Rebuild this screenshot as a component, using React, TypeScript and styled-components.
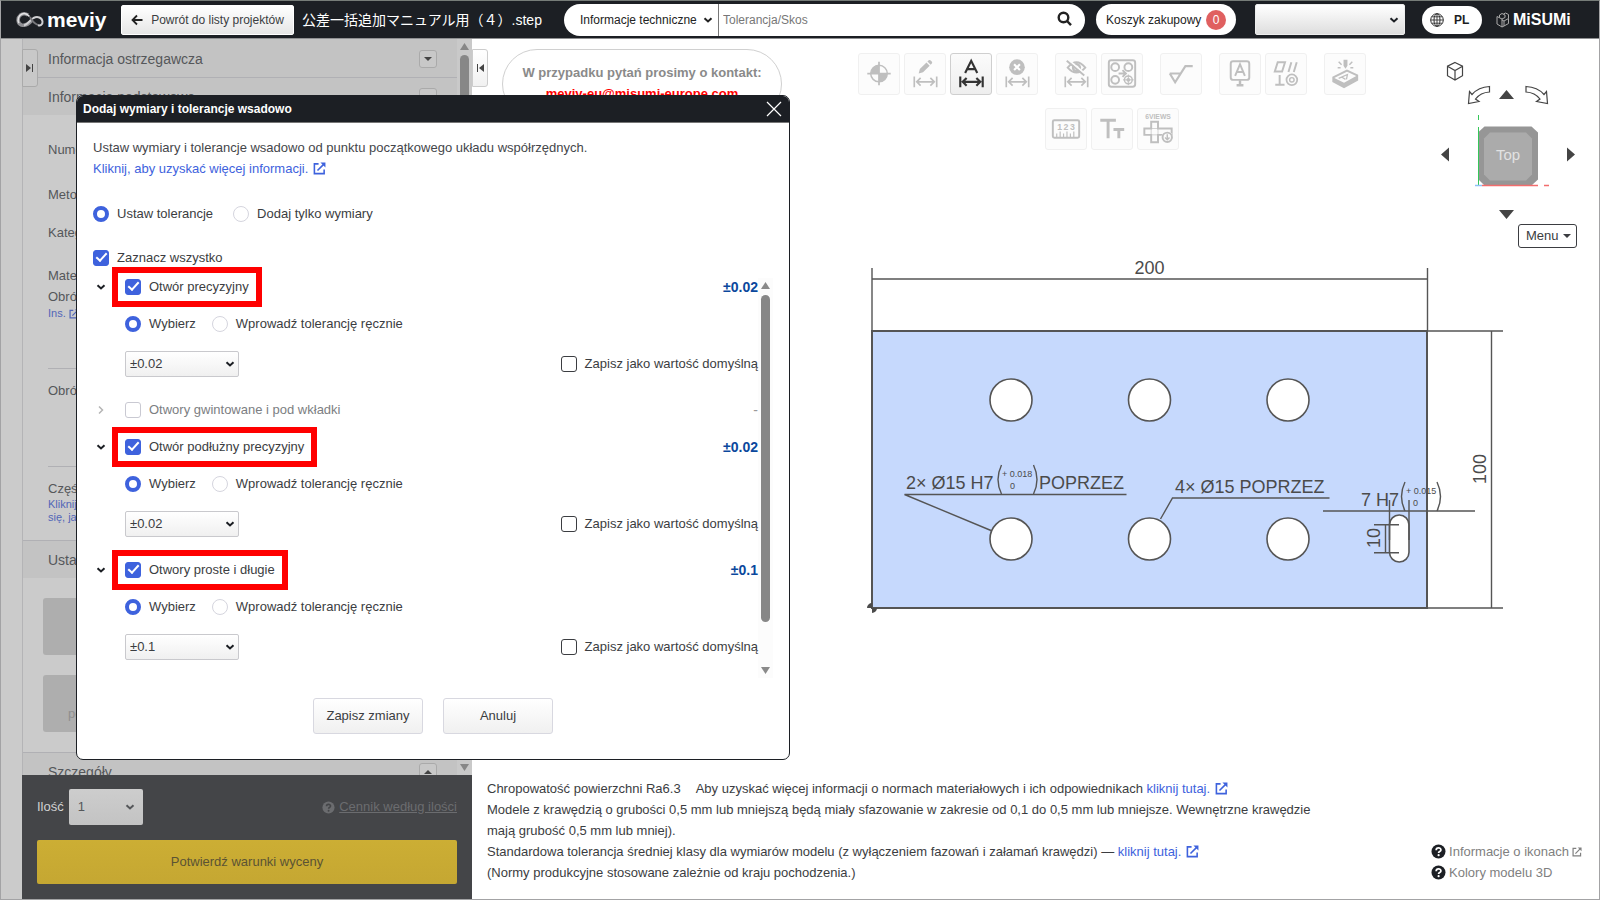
import React from 'react';
import styled, { createGlobalStyle, css } from 'styled-components';

const ink = '#1c1f24';
const text = '#3b3d41';
const blue = '#3e62dd';

const GlobalStyle = createGlobalStyle`
  *, *::before, *::after { box-sizing: border-box; }
  body {
    margin: 0;
    background: #fff;
    color: ${text};
    font: 13px/20px "Liberation Sans", Arial, "Noto Sans CJK JP", sans-serif;
  }
  button, input, select { font: inherit; color: inherit; margin: 0; }
  a { color: ${blue}; text-decoration: none; }
  svg { display: block; flex: none; }
`;

/* ---------- page frame ---------- */

const Page = styled.div`
  position: relative;
  display: flex;
  flex-direction: column;
  min-height: 100vh;
  border: 1px solid #a3a3a5;
  border-top-color: #767c78;
  overflow: hidden;
`;

const Header = styled.header`
  display: flex;
  align-items: center;
  height: 38px;
  padding-left: 15px;
  background: ${ink};
  border-bottom: 1px solid #8f9092;
  color: #fff;
  font-size: 12px;
`;

const Brand = styled.a`
  display: flex;
  align-items: center;
  gap: 2px;
  width: 105px;
  color: #fff;
  font-size: 21px;
  font-weight: 700;
  line-height: 24px;
`;

const BackButton = styled.button`
  display: flex;
  align-items: center;
  justify-content: center;
  gap: 8px;
  width: 173px;
  height: 30px;
  padding: 0;
  border: 1px solid #fff;
  border-radius: 2px;
  background: linear-gradient(#fff, #e6e6e6);
  color: ${text};
`;

const FileName = styled.h1`
  width: 262px;
  margin: 0 0 0 8px;
  font-size: 14px;
  font-weight: 400;
  white-space: nowrap;
`;

const Search = styled.form`
  display: flex;
  align-items: center;
  flex: 1;
  height: 32px;
  padding: 0 12px 0 16px;
  border-radius: 16px;
  background: #fff;
  color: #222;
`;

const SearchInput = styled.input`
  flex: 1;
  min-width: 0;
  height: 32px;
  padding: 0 4px;
  border: 0;
  border-left: 1px solid #777;
  background: transparent;
  &::placeholder { color: #777; opacity: 1; }
`;

const IconButton = styled.button`
  display: grid;
  place-items: center;
  padding: 0;
  border: 0;
  background: none;
  color: inherit;
`;

const CartButton = styled.button`
  display: flex;
  align-items: center;
  justify-content: space-between;
  width: 140px;
  height: 31px;
  margin-left: 11px;
  padding: 0 10px;
  border: 0;
  border-radius: 16px;
  background: #fff;
  color: #222;
  white-space: nowrap;
`;

const Badge = styled.span`
  width: 20px;
  height: 20px;
  border-radius: 10px;
  background: #e06060;
  color: #fff;
  text-align: center;
`;

const LangButton = styled.button`
  display: flex;
  align-items: center;
  gap: 10px;
  width: 60px;
  height: 28px;
  margin-left: 17px;
  padding: 0 8px;
  border: 0;
  border-radius: 14px;
  background: #fff;
  color: ${ink};
  font-weight: 700;
`;

const Misumi = styled.a`
  display: flex;
  align-items: center;
  gap: 3px;
  width: 103px;
  margin-left: 14px;
  color: #fff;
  font-size: 16px;
  font-weight: 700;
`;

/* ---------- form parts ---------- */

const SelectBox = styled.span<{ $variant: 'plain' | 'header' | 'tolerance' | 'quantity' }>`
  display: grid;
  align-items: center;
  & > * { grid-area: 1 / 1; }
  & > svg { justify-self: end; pointer-events: none; }
  & > select {
    width: 100%;
    height: 100%;
    appearance: none;
    border: 0;
    background: none;
  }
  ${p => p.$variant === 'plain' && css`
    width: 138px; height: 32px;
    & > svg { margin-right: 5px; }
  `}
  ${p => p.$variant === 'header' && css`
    width: 150px; height: 31px; margin-left: 19px;
    color: ${ink};
    & > select { border: 1px solid #eee; border-radius: 2px; background: linear-gradient(#fff, #dedede); }
    & > svg { margin-right: 6px; }
  `}
  ${p => p.$variant === 'tolerance' && css`
    width: 114px; height: 26px;
    & > select { padding-left: 4px; border: 1px solid #c9c9cd; border-radius: 2px; background: linear-gradient(#fff, #f0f0f0); }
    & > svg { margin-right: 4px; }
  `}
  ${p => p.$variant === 'quantity' && css`
    width: 74px; height: 36px; color: #55575a;
    & > select { padding-left: 9px; border-radius: 2px; background: linear-gradient(#cdcdcd, #c3c3c3); }
    & > svg { margin-right: 8px; }
  `}
`;

const Choice = styled.label<{ $muted?: boolean }>`
  display: flex;
  align-items: center;
  gap: 8px;
  white-space: nowrap;
  ${p => p.$muted && css`color: #7c7e82;`}
`;

const Check = styled.input.attrs({ type: 'checkbox' })<{ $dark?: boolean }>`
  appearance: none;
  flex: none;
  display: grid;
  place-items: center;
  width: 16px;
  height: 16px;
  border: 1px solid ${p => (p.$dark ? '#3b3d41' : '#c9c9d2')};
  border-radius: 3px;
  background: #fff;
  &:checked { border-color: ${blue}; background: ${blue}; }
  &:checked::after {
    content: '';
    width: 11px;
    height: 6px;
    margin-bottom: 4px;
    border: solid #fff;
    border-width: 0 0 2px 2px;
    transform: rotate(-48deg);
  }
`;

const Radio = styled.input.attrs({ type: 'radio' })`
  appearance: none;
  flex: none;
  width: 16px;
  height: 16px;
  border: 1px solid #d5d5de;
  border-radius: 50%;
  background: #fff;
  &:checked { border: 4px solid ${blue}; }
`;

const ChoiceRow = styled.div<{ $tight?: boolean }>`
  display: flex;
  align-items: center;
  gap: ${p => (p.$tight ? 16 : 20)}px;
`;

/* ---------- sidebar ---------- */

const Main = styled.div`
  display: grid;
  grid-template-columns: 21px 450px minmax(0, 1fr);
  flex: 1;
`;

const Rail = styled.div`
  background: #cbcbcb;
`;

const Sidebar = styled.aside`
  display: flex;
  flex-direction: column;
  min-height: 0;
  background: #cbcbcb;
`;

const SidebarScroll = styled.div`
  display: grid;
  grid-template-columns: minmax(0, 1fr) 15px;
  flex: 1 1 0;
  border-left: 1px solid #b4b4b6;
  overflow: hidden;
`;

const Sections = styled.div`
  min-height: 0;
  height: 0;
`;

const SectionHead = styled.div<{ $ruled?: boolean }>`
  display: flex;
  align-items: center;
  justify-content: space-between;
  height: 38px;
  padding: 0 20px 0 25px;
  background: #c3c3c3;
  border-top: 1px solid ${p => (p.$ruled ? '#b0b0b4' : '#c3c3c3')};
  color: #55575a;
  font-size: 14px;
`;

const FoldButton = styled.button`
  display: grid;
  place-items: center;
  width: 18px;
  height: 18px;
  padding: 0;
  border: 1px solid #aaa;
  border-radius: 3px;
  background: #c8c8c8;
  color: #444;
`;

const SectionBody = styled.div<{ $height: number }>`
  height: ${p => p.$height}px;
  padding: 25px 20px 0 25px;
  color: #55575a;
`;

const Field = styled.div<{ $height: number }>`
  height: ${p => p.$height}px;
  overflow: hidden;
`;

const Hint = styled.a`
  display: flex;
  align-items: center;
  gap: 3px;
  color: #5266b8;
  font-size: 11px;
  line-height: 13px;
`;

const Rule = styled.hr`
  height: 1px;
  margin: 0 0 12px;
  border: 0;
  background: #b0b0b4;
`;

const Tiles = styled.div`
  display: grid;
  gap: 20px;
  height: 174px;
  padding: 20px;
  align-content: start;
`;

const Tile = styled.button`
  height: 57px;
  padding: 20px 0 0 25px;
  border: 0;
  border-radius: 3px;
  background: #aeaeae;
  color: #8f8f8f;
  text-align: left;
`;

const SidebarTrack = styled.div`
  display: flex;
  flex-direction: column;
  align-items: center;
  gap: 5px;
  padding: 4px 0;
  background: #c9c9c9;
`;

const Thumb = styled.div<{ $height: number }>`
  width: 9px;
  height: ${p => p.$height}px;
  border-radius: 5px;
  background: #878787;
`;

const TrackSpace = styled.div`
  flex: 1;
`;

const OrderPanel = styled.div`
  display: flex;
  flex-direction: column;
  gap: 15px;
  height: 124px;
  padding: 14px 15px;
  background: #444548;
`;

const OrderRow = styled.div`
  display: flex;
  align-items: center;
  justify-content: space-between;
`;

const Quantity = styled.label`
  display: flex;
  align-items: center;
  gap: 5px;
  color: #d2d2d2;
`;

const PriceLink = styled.a`
  display: flex;
  align-items: center;
  gap: 4px;
  color: #6b6c6f;
  & > span { text-decoration: underline; }
`;

const QuoteButton = styled.button`
  height: 44px;
  border: 0;
  border-radius: 2px;
  background: linear-gradient(#ccae34, #c5a732);
  color: #5b5334;
`;

const PanelTab = styled.button<{ $side: 'left' | 'right' }>`
  position: absolute;
  top: 48px;
  left: ${p => (p.$side === 'left' ? 21 : 471)}px;
  display: grid;
  place-items: center;
  width: 16px;
  height: 38px;
  padding: 0;
  border: 1px solid ${p => (p.$side === 'left' ? '#aaa' : '#ccc')};
  border-radius: 0 3px 3px 0;
  background: ${p => (p.$side === 'left' ? '#c8c8c8' : 'linear-gradient(#fff, #f1f1f1)')};
  color: #444;
`;

/* ---------- viewer ---------- */

const Viewer = styled.main`
  display: flex;
  flex-direction: column;
  justify-content: space-between;
  background: #fff;
`;

const ViewerTop = styled.div`
  display: flex;
  align-items: flex-start;
  padding: 10px 22px 0 30px;
`;

const Contact = styled.address`
  width: 280px;
  height: 70px;
  padding-top: 12px;
  border: 1px solid #d0d0d0;
  border-radius: 36px;
  color: #8a8a8a;
  font-style: normal;
  font-weight: 700;
  line-height: 21px;
  text-align: center;
  white-space: nowrap;
  & > a { display: block; color: #f00; }
`;

const Toolbar = styled.div`
  display: flex;
  flex-direction: column;
  align-items: center;
  gap: 13px;
  flex: 1;
  padding-top: 4px;
`;

const ToolRow = styled.div`
  display: flex;
  gap: 17px;
`;

const ToolGroup = styled.div`
  display: flex;
  gap: 4px;
`;

const Tool = styled.button<{ $active?: boolean }>`
  display: block;
  width: 42px;
  height: 42px;
  padding: 0;
  border: 1px solid ${p => (p.$active ? '#cfcfcf' : '#f0f0f0')};
  border-radius: 3px;
  background: ${p => (p.$active ? 'linear-gradient(#fbfbfb, #eee)' : '#fcfcfc')};
  color: ${p => (p.$active ? '#333' : '#bfbfbf')};
`;

const ViewNav = styled.div`
  display: flex;
  flex-direction: column;
  align-items: flex-end;
  gap: 4px;
  width: 136px;
  padding-top: 11px;
`;

const MenuButton = styled.button`
  display: flex;
  align-items: center;
  justify-content: space-between;
  width: 59px;
  height: 24px;
  padding: 0 5px 0 7px;
  border: 1px solid ${text};
  border-radius: 3px;
  background: #fff;
`;

const Drawing = styled.div`
  display: flex;
  justify-content: flex-end;
  padding: 8px 88px 0 0;
`;

const Notes = styled.footer`
  display: flex;
  align-items: flex-end;
  justify-content: space-between;
  margin-top: auto;
  padding: 0 17px 16px 15px;
  line-height: 21px;
`;

const NoteText = styled.div`
  max-width: 845px;
  & > p { margin: 0; }
`;

const InlineLink = styled.a`
  display: inline-flex;
  align-items: center;
  gap: 5px;
`;

const Gap = styled.span`
  display: inline-block;
  width: 15px;
`;

const Legend = styled.div`
  display: grid;
  & > a {
    display: flex;
    align-items: center;
    gap: 3px;
    color: #808080;
  }
`;

/* ---------- dialog ---------- */

const Dialog = styled.section`
  position: absolute;
  top: 94px;
  left: 75px;
  width: 714px;
  border: 1px solid ${ink};
  border-radius: 7px;
  background: #fff;
  overflow: hidden;
`;

const DialogHead = styled.div`
  display: flex;
  align-items: center;
  justify-content: space-between;
  height: 27px;
  padding: 0 7px 0 6px;
  border-bottom: 1px solid #777;
  background: ${ink};
  color: #fff;
  & > h2 { margin: 0; font-size: 12px; }
`;

const DialogBody = styled.div`
  padding: 14px 16px 25px;
`;

const Intro = styled.p`
  margin: 0 0 25px;
  line-height: 21px;
  color: #44464a;
`;

const SelectAll = styled.div`
  margin-top: 24px;
`;

const ListFrame = styled.div`
  display: grid;
  grid-template-columns: minmax(0, 1fr) 15px;
  height: 410px;
`;

const Groups = styled.div`
  position: relative;
`;

const GroupHead = styled.div`
  display: flex;
  align-items: center;
  height: 37px;
`;

const Toggle = styled(IconButton)`
  width: 16px;
  height: 16px;
  margin-right: 3px;
`;

const Frame = styled.div<{ $marked?: boolean }>`
  display: flex;
  align-items: center;
  height: 40px;
  padding: 0 7px;
  border: 6px solid ${p => (p.$marked ? '#f00' : 'transparent')};
`;

const Value = styled.output<{ $muted?: boolean }>`
  margin-left: auto;
  color: ${p => (p.$muted ? '#999' : '#0b489d')};
  font-size: 14px;
  font-weight: ${p => (p.$muted ? 400 : 700)};
`;

const GroupBody = styled.div`
  padding-left: 32px;
  height: 86px;
  & > :first-child { height: 37px; }
`;

const ToleranceRow = styled.div`
  display: flex;
  align-items: center;
  justify-content: space-between;
  height: 43px;
`;

const ListTrack = styled.div`
  display: flex;
  flex-direction: column;
  align-items: center;
  gap: 6px;
  margin-top: 10px;
  padding: 4px 0;
  background: #fcfcfc;
`;

const Actions = styled.div`
  display: flex;
  justify-content: center;
  gap: 20px;
  margin-top: 20px;
`;

const ActionButton = styled.button`
  width: 110px;
  height: 36px;
  border: 1px solid #d8d8e0;
  border-radius: 3px;
  background: linear-gradient(#fff, #f0f0f0);
`;

/* ---------- icons ---------- */

const Chevron = ({ right = false, color = 'currentColor' }: { right?: boolean; color?: string }) => (
  <svg width="10" height="10" viewBox="0 0 10 10" fill="none" stroke={color} strokeWidth={right ? 1.5 : 2}>
    <path d={right ? 'M3 1.5l3.5 3.5L3 8.500' : 'M1.500 3.200l3.500 3.300 3.500-3.300'} />
  </svg>
);

const Triangle = ({ up = false, color = 'currentColor', size = 9 }: { up?: boolean; color?: string; size?: number }) => (
  <svg width={size} height={size - 2} viewBox="0 0 9 7">
    <path d={up ? 'M4.500 0L9 7H0z' : 'M0 0h9L4.500 7z'} fill={color} />
  </svg>
);

const Caret = ({ up = false }: { up?: boolean }) => (
  <svg width="8" height="4" viewBox="0 0 8 4">
    <path d={up ? 'M4 0l4 4H0z' : 'M0 0h8L4 4z'} fill="currentColor" />
  </svg>
);

const External = ({ size = 13 }: { size?: number }) => (
  <svg width={size} height={size} viewBox="0 0 14 14" fill="none" stroke="currentColor" strokeWidth="1.700">
    <path d="M6 2H1.500v10.500H12V8M4.800 9.200L12 2" />
    <path d="M8 .6h5.400V6z" fill="currentColor" stroke="none" />
  </svg>
);

const Question = ({ fill, mark, size = 15 }: { fill: string; mark: string; size?: number }) => (
  <svg width={size} height={size} viewBox="0 0 15 15">
    <circle cx="7.5" cy="7.5" r="7" fill={fill} />
    <path d="M5.200 6.200c0-3 4.700-3 4.700-.3 0 1.700-2.300 1.500-2.300 3" fill="none" stroke={mark} strokeWidth="1.800" />
    <circle cx="7.6" cy="11.200" r="1.100" fill={mark} />
  </svg>
);

const Span = () => (
  <path d="M9.500 24v11M32.500 24v11M12 29.500h18M16 25.500l-4 4 4 4M26 25.500l4 4-4 4" strokeWidth="1.700" />
);

const toolDrawings: Record<string, React.ReactNode> = {
  origin: (
    <>
      <circle cx="20.5" cy="21" r="8.500" strokeWidth="1.500" />
      <path d="M20.500 21v-8.500a8.500 8.500 0 0 0-8.500 8.500zM20.500 21v8.500a8.500 8.500 0 0 0 8.500-8.500z" fill="currentColor" stroke="none" />
      <path d="M20.500 9v24M8.500 21h24" strokeWidth="1.800" />
    </>
  ),
  edit: (
    <>
      <path d="M14 21l1.200-4.500 6.800-6.800 3.300 3.300-6.800 6.800zM23 8.800l1.300-1.300q1.200-.8 2.300.3l.8.8q1 1.200.1 2.200l-1.200 1.300z" fill="currentColor" stroke="none" />
      <Span />
    </>
  ),
  auto: (
    <>
      <path d="M14.500 20.500L20.700 8l6.200 12.500M17 16.500h7.500" strokeWidth="2.200" />
      <path d="M9.500 24v11M32.500 24v11M12 29.500h18M16 25.500l-4 4 4 4M26 25.500l4 4-4 4" strokeWidth="2.200" />
    </>
  ),
  remove: (
    <>
      <circle cx="20.5" cy="14.500" r="8" fill="currentColor" stroke="none" />
      <path d="M17.500 11.500l6 6M23.500 11.500l-6 6" stroke="#fff" strokeWidth="2.200" />
      <Span />
    </>
  ),
  hide: (
    <>
      <path d="M12 15q9-11 18 0-9 10-18 0z" strokeWidth="2" />
      <circle cx="21" cy="15" r="3.500" strokeWidth="2.500" />
      <path d="M12.500 7l18 15" stroke="#fcfcfc" strokeWidth="2" />
      <path d="M11 8l18 15" strokeWidth="2" />
      <Span />
    </>
  ),
  pattern: (
    <>
      <rect x="7" y="7.500" width="27" height="27" rx="2.500" strokeWidth="2" />
      <circle cx="13.500" cy="14.500" r="4" strokeWidth="2" />
      <circle cx="27" cy="14.500" r="4" strokeWidth="2" />
      <circle cx="13.500" cy="27.500" r="4" strokeWidth="2" />
      <circle cx="27" cy="27.500" r="4" strokeWidth="1.500" />
      <circle cx="27" cy="27.500" r="2" fill="currentColor" stroke="none" />
      <path d="M27 22v11M21.500 27.500h11" strokeWidth="1" />
      <path d="M17 21h7M21 17.500l3.500 3.500-3.500 3.500" strokeWidth="2" />
    </>
  ),
  roughness: <path d="M9 21h12M9 21l5.500 9L25 13.500h7.500" strokeWidth="2.200" />,
  datum: (
    <>
      <rect x="11" y="8.500" width="19" height="19" rx="2.500" strokeWidth="2" />
      <path d="M15.500 23.500l5-12 5 12M17 19.500h7" strokeWidth="2" />
      <path d="M20.500 28v5M17 33h7" strokeWidth="2.500" />
    </>
  ),
  geometric: (
    <>
      <path d="M9 19l3-9.500h7.500l-3 9.500zM23 19.500l3-10M28.500 19.500l3-10M14 22.500v10M9.500 32.500h9.500" strokeWidth="2" />
      <circle cx="26.500" cy="27.500" r="5.500" strokeWidth="1.800" />
      <circle cx="26.500" cy="27.500" r="2.300" strokeWidth="1.500" />
    </>
  ),
  engraving: (
    <>
      <path d="M8.500 25l14-7 10.500 5v4.500l-13.500 7.500-11-6z" strokeWidth="2" />
      <path d="M8.500 25l11 5.500L33 23v4.500L19.500 35l-11-6z" fill="currentColor" stroke="none" />
      <path d="M14 26l9-4-1 5M17 24.500l4 2.500" strokeWidth="1.300" />
      <path d="M14 9l3 3M28 9l-3 3M13 15h3M26 15h3" strokeWidth="1.500" />
      <path d="M19 7h4v6l-2 3-2-3z" fill="currentColor" stroke="none" />
    </>
  ),
  measure: (
    <>
      <rect x="7" y="12.500" width="27" height="18" rx="1.500" strokeWidth="2" />
      <path d="M11 30v-4M14.500 30v-6M18 30v-4M21.500 30v-6M25 30v-4M28.500 30v-6" strokeWidth="1.200" />
      <text x="11.500" y="23" fontSize="9" fontWeight="700" letterSpacing="1.500" fill="currentColor" stroke="none">123</text>
    </>
  ),
  textSize: (
    <>
      <path d="M8.500 12.500h16M16.500 12.500V31" strokeWidth="3" />
      <path d="M22 22h11M27.500 22v9" strokeWidth="3" />
    </>
  ),
  sixViews: (
    <>
      <text x="20.500" y="11" fontSize="7" fontWeight="700" textAnchor="middle" fill="currentColor" stroke="none">6VIEWS</text>
      <path d="M13.500 14h7v7h14v6.500h-14V35h-7v-7.500h-7V21h7z" strokeWidth="2" />
      <path d="M13.500 21h7v6.500h-7z" strokeWidth=".7" />
      <circle cx="30" cy="30" r="6" fill="#fcfcfc" stroke="none" />
      <circle cx="30" cy="30" r="4.800" strokeWidth="2" />
      <path d="M30 27v5M27.700 30.300l2.300 2.200 2.300-2.200" strokeWidth="1.500" />
    </>
  ),
};

const ToolButton = ({ name, label, active }: { name: string; label: string; active?: boolean }) => (
  <Tool type="button" aria-label={label} $active={active}>
    <svg width="40" height="40" viewBox="0 1 41 41" fill="none" stroke="currentColor">
      {toolDrawings[name]}
    </svg>
  </Tool>
);

const CubeNavigator = () => (
  <svg width="136" height="160" viewBox="1441 60 136 160" role="img" aria-label="Top">
    <g fill="none" stroke="#444" strokeWidth="1.200">
      <path d="M1455 62.500l7.500 3.700v9.500L1455 80l-7.500-4.300v-9.500zM1447.500 66.200l7.500 4.300 7.500-4.300M1455 70.500V80" />
      <path d="M1489.500 86.500v5.500q-9 .5-14 7l3.500 2.500-10.500 2 1-12 2.500 3q6.500-7.500 17.500-8z" />
      <path d="M1526 86.500v5.500q9 .5 14 7l-3.500 2.500 11 2-1-12-2.500 3q-6.500-7.500-18-8z" />
    </g>
    <g fill="#444">
      <path d="M1506.500 90l7.500 9h-15zM1506.500 219l7.500-9h-15zM1441 154.500l8-7v14zM1575 154.500l-8-7v14z" />
    </g>
    <path d="M1478.500 132l6-5.500h47l6.500 6v47l-6.500 6h-47l-6-6z" fill="#969696" />
    <path d="M1484 138.500l6-6h36l6 6v36l-6 6h-36l-6-6z" fill="#ababab" />
    <path d="M1478.500 115v5M1478.500 127v58" stroke="#35c759" />
    <path d="M1482 185.500h56M1544 185.500h5" stroke="#f26d6d" strokeWidth="1.500" />
    <path d="M1475 185.500h7" stroke="#8fc3f5" strokeWidth="1.500" />
    <text x="1508" y="160" fontSize="15" textAnchor="middle" fill="#e2e2e2">Top</text>
  </svg>
);

const PlateDrawing = () => (
  <svg width="648" height="360" viewBox="863 256 648 360" fill="#4b4b4b" fontSize="18" role="img" aria-label="200 × 100">
    <rect x="872" y="331" width="555" height="277" fill="#c6d9fd" stroke="#555" strokeWidth="2" />
    <g fill="none" stroke="#555" strokeWidth="1.400">
      <path d="M872 268v63M1427.500 268v63M872 279h555M1427 331h76M1427 608h76M1491.500 331v277" />
      {[1011, 1149.5, 1288].map(x => [400, 539].map(y => (
        <circle key={`${x}-${y}`} cx={x} cy={y} r="21" fill="#fff" strokeWidth="1.600" />
      )))}
      <rect x="1389.500" y="515" width="19.500" height="47" rx="9.700" fill="#fff" strokeWidth="1.600" />
      <path d="M991 530.500L904.500 494.500H1126.500M1160.500 519l12-21H1329.500M1323 511h152M1389.500 500v40M1409 500v40M1374 524.700h25M1374 552.700h25M1385.500 524.700v28" />
      <path d="M1001.500 465q-7 14.500 0 29M1033.500 465q7 14.500 0 29M1405 482q-7 14.500 0 29M1437 482q7 14.500 0 29" />
    </g>
    <path d="M872 608v-5a5 5 0 0 0-5 5zM872 608v5a5 5 0 0 0 5-5z" />
    <text x="1149.500" y="274" textAnchor="middle">200</text>
    <text transform="translate(1486 469) rotate(-90)" textAnchor="middle">100</text>
    <text transform="translate(1380 538) rotate(-90)" textAnchor="middle">10</text>
    <text x="906" y="489">2× Ø15 H7</text>
    <text x="1039" y="489">POPRZEZ</text>
    <text x="1175" y="493">4× Ø15 POPRZEZ</text>
    <text x="1361" y="506">7 H7</text>
    <g fontSize="9">
      <text x="1002" y="477">+ 0.018</text>
      <text x="1010" y="489">0</text>
      <text x="1406" y="494">+ 0.015</text>
      <text x="1413" y="506">0</text>
    </g>
  </svg>
);

/* ---------- composition ---------- */

type GroupData = { id: string; name: string; value: string; open: boolean };

const groups: GroupData[] = [
  { id: 'precise', name: 'Otwór precyzyjny', value: '±0.02', open: true },
  { id: 'threaded', name: 'Otwory gwintowane i pod wkładki', value: '-', open: false },
  { id: 'slot', name: 'Otwór podłużny precyzyjny', value: '±0.02', open: true },
  { id: 'plain', name: 'Otwory proste i długie', value: '±0.1', open: true },
];

const ToleranceGroup = ({ id, name, value, open }: GroupData) => (
  <div>
    <GroupHead>
      <Toggle type="button" aria-label={name} aria-expanded={open}>
        <Chevron right={!open} color={open ? ink : '#b5b5b5'} />
      </Toggle>
      <Frame $marked={open}>
        <Choice $muted={!open}>
          <Check defaultChecked={open} disabled={!open} />
          {name}
        </Choice>
      </Frame>
      <Value $muted={!open}>{value}</Value>
    </GroupHead>
    {open && (
      <GroupBody>
        <ChoiceRow $tight>
          <Choice><Radio name={id} defaultChecked />Wybierz</Choice>
          <Choice><Radio name={id} />Wprowadź tolerancję ręcznie</Choice>
        </ChoiceRow>
        <ToleranceRow>
          <SelectBox $variant="tolerance">
            <select aria-label={name} defaultValue={value}><option>{value}</option></select>
            <Chevron color={ink} />
          </SelectBox>
          <Choice><Check $dark />Zapisz jako wartość domyślną</Choice>
        </ToleranceRow>
      </GroupBody>
    )}
  </div>
);

export default function App() {
  return (
    <Page>
      <GlobalStyle />
      <Header>
        <Brand href="#">
          <svg width="29" height="18" viewBox="0 0 29 18" fill="none">
            <path d="M12 4Q8 1.500 4.500 4C1 7 1.500 12.500 5.500 14c4.500 1.300 8-2 10.500-5" stroke="#8f8f93" strokeWidth="3.600" />
            <path d="M13.500 5.500Q10 1.500 6 3c-3.500 1.500-5 6-3 9" stroke="#e4e4e6" strokeWidth="1.500" />
            <path d="M8 14.500C12 13.500 14 9 17.500 7c4-2 8.500-.5 9 3.500.4 3.500-2.500 4.500-4.500 3.500" stroke="#d0d0d3" strokeWidth="2" />
            <path d="M14 6q3 6 8 8" stroke="#77777b" strokeWidth="1.800" />
          </svg>
          meviy
        </Brand>
        <BackButton type="button">
          <svg width="12" height="12" viewBox="0 0 12 12" fill="none" stroke="#222" strokeWidth="1.800">
            <path d="M11.500 6H1.500M6 1.500L1.500 6 6 10.500" />
          </svg>
          Powrót do listy projektów
        </BackButton>
        <FileName>公差一括追加マニュアル用（４）.step</FileName>
        <Search>
          <SelectBox $variant="plain">
            <select aria-label="Zakres"><option>Informacje techniczne</option></select>
            <Chevron />
          </SelectBox>
          <SearchInput aria-label="Szukaj" placeholder="Tolerancja/Skos" />
          <IconButton type="button" aria-label="Szukaj">
            <svg width="17" height="17" viewBox="0 0 17 17" fill="none" stroke="#222" strokeWidth="2.400">
              <circle cx="7.500" cy="6.500" r="4.800" />
              <path d="M11 10l4 4.200" />
            </svg>
          </IconButton>
        </Search>
        <CartButton type="button">Koszyk zakupowy<Badge>0</Badge></CartButton>
        <SelectBox $variant="header">
          <select aria-label="Konto" />
          <Chevron />
        </SelectBox>
        <LangButton type="button">
          <svg width="14" height="14" viewBox="0 0 14 14" fill="none" stroke="#333">
            <circle cx="7" cy="7" r="6.300" />
            <ellipse cx="7" cy="7" rx="3" ry="6.300" />
            <path d="M7 .7v12.600M.7 7h12.600M1.700 3.800h10.600M1.700 10.200h10.600" strokeWidth=".9" />
          </svg>
          PL
        </LangButton>
        <Misumi href="#">
          <svg width="14" height="16" viewBox="0 0 14 16" fill="none" stroke="#aaa" strokeWidth="1">
            <path d="M6 15V7L1 4.500v7.500zM6 7l3-1.500V3L6 1.500 3.500 3v2.500M6 15l2-1V9l4.500-2.500V2.500L9.500 1 7.500 2M8 14l4.500-2.500v-5M8 9L6 8" />
          </svg>
          MiSUMi
        </Misumi>
      </Header>

      <Main>
        <Rail />
        <Sidebar>
          <SidebarScroll>
            <Sections>
              <SectionHead>
                Informacja ostrzegawcza
                <FoldButton type="button" aria-label="Rozwiń"><Caret /></FoldButton>
              </SectionHead>
              <SectionHead $ruled>
                Informacje podstawowe
                <FoldButton type="button" aria-label="Zwiń"><Caret up /></FoldButton>
              </SectionHead>
              <SectionBody $height={425}>
                <Field $height={45}>Numer</Field>
                <Field $height={38}>Metoda</Field>
                <Field $height={43}>Kategoria</Field>
                <Field $height={21}>Materiał</Field>
                <Field $height={20}>Obróbka</Field>
                <Field $height={61}><Hint href="#">Ins. <External size={10} /></Hint></Field>
                <Rule />
                <Field $height={85}>Obróbka</Field>
                <Rule />
                <Field $height={19}>Części</Field>
                <Hint href="#">Kliknij,<br />się, jak</Hint>
              </SectionBody>
              <SectionHead $ruled>Ustawienia</SectionHead>
              <Tiles>
                <Tile type="button" aria-label="Ustawienia" />
                <Tile type="button">po</Tile>
              </Tiles>
              <SectionHead $ruled>
                Szczegóły
                <FoldButton type="button" aria-label="Zwiń"><Caret up /></FoldButton>
              </SectionHead>
            </Sections>
            <SidebarTrack>
              <Triangle up color="#878787" />
              <Thumb $height={500} />
              <TrackSpace />
              <Triangle color="#878787" />
            </SidebarTrack>
          </SidebarScroll>
          <OrderPanel>
            <OrderRow>
              <Quantity>
                Ilość
                <SelectBox $variant="quantity">
                  <select><option>1</option></select>
                  <Chevron />
                </SelectBox>
              </Quantity>
              <PriceLink href="#">
                <Question fill="#6b6c6f" mark="#444548" size={13} />
                <span>Cennik według ilości</span>
              </PriceLink>
            </OrderRow>
            <QuoteButton type="button">Potwierdź warunki wyceny</QuoteButton>
          </OrderPanel>
        </Sidebar>

        <Viewer>
          <ViewerTop>
            <Contact>
              W przypadku pytań prosimy o kontakt:
              <a href="mailto:meviy-eu@misumi-europe.com">meviy-eu@misumi-europe.com</a>
            </Contact>
            <Toolbar>
              <ToolRow>
                <ToolGroup>
                  <ToolButton name="origin" label="Punkt początkowy" />
                  <ToolButton name="edit" label="Edytuj wymiar" />
                  <ToolButton name="auto" label="Dodaj wymiary wsadowo" active />
                  <ToolButton name="remove" label="Usuń wymiar" />
                </ToolGroup>
                <ToolGroup>
                  <ToolButton name="hide" label="Ukryj wymiar" />
                  <ToolButton name="pattern" label="Grupa otworów" />
                </ToolGroup>
                <ToolGroup><ToolButton name="roughness" label="Chropowatość" /></ToolGroup>
                <ToolGroup>
                  <ToolButton name="datum" label="Baza" />
                  <ToolButton name="geometric" label="Tolerancja geometryczna" />
                </ToolGroup>
                <ToolGroup><ToolButton name="engraving" label="Grawerowanie" /></ToolGroup>
              </ToolRow>
              <ToolRow>
                <ToolGroup>
                  <ToolButton name="measure" label="Pomiar" />
                  <ToolButton name="textSize" label="Rozmiar tekstu" />
                  <ToolButton name="sixViews" label="Widoki" />
                </ToolGroup>
              </ToolRow>
            </Toolbar>
            <ViewNav>
              <CubeNavigator />
              <MenuButton type="button">Menu <Caret /></MenuButton>
            </ViewNav>
          </ViewerTop>
          <Drawing><PlateDrawing /></Drawing>
          <Notes>
            <NoteText>
              <p>
                Chropowatość powierzchni Ra6.3<Gap />Aby uzyskać więcej informacji o normach materiałowych i ich odpowiednikach{' '}
                <InlineLink href="#">kliknij tutaj. <External /></InlineLink>
              </p>
              <p>
                Modele z krawędzią o grubości 0,5 mm lub mniejszą będą miały sfazowanie w zakresie od 0,1 do 0,5 mm lub mniejsze.
                Wewnętrzne krawędzie mają grubość 0,5 mm lub mniej).
              </p>
              <p>
                Standardowa tolerancja średniej klasy dla wymiarów modelu (z wyłączeniem fazowań i załamań krawędzi) —{' '}
                <InlineLink href="#">kliknij tutaj. <External /></InlineLink>
              </p>
              <p>(Normy produkcyjne stosowane zależnie od kraju pochodzenia.)</p>
            </NoteText>
            <Legend>
              <a href="#"><Question fill={ink} mark="#fff" />Informacje o ikonach <External size={10} /></a>
              <a href="#"><Question fill={ink} mark="#fff" />Kolory modelu 3D</a>
            </Legend>
          </Notes>
        </Viewer>
      </Main>

      <PanelTab type="button" $side="left" aria-label="Rozwiń panel">
        <svg width="8" height="10" viewBox="0 0 8 10" fill="currentColor"><path d="M0 1l5 4-5 4zM6 1h1v8H6z" /></svg>
      </PanelTab>
      <PanelTab type="button" $side="right" aria-label="Zwiń panel">
        <svg width="8" height="10" viewBox="0 0 8 10" fill="currentColor"><path d="M8 1L3 5l5 4zM1 1h1v8H1z" /></svg>
      </PanelTab>

      <Dialog role="dialog" aria-labelledby="dialog-title">
        <DialogHead>
          <h2 id="dialog-title">Dodaj wymiary i tolerancje wsadowo</h2>
          <IconButton type="button" aria-label="Zamknij">
            <svg width="16" height="16" viewBox="0 0 16 16" stroke="#fff" strokeWidth="1.200">
              <path d="M1 1l14 14M15 1L1 15" />
            </svg>
          </IconButton>
        </DialogHead>
        <DialogBody>
          <Intro>
            Ustaw wymiary i tolerancje wsadowo od punktu początkowego układu współrzędnych.<br />
            <InlineLink href="#">Kliknij, aby uzyskać więcej informacji. <External /></InlineLink>
          </Intro>
          <ChoiceRow>
            <Choice><Radio name="mode" defaultChecked />Ustaw tolerancje</Choice>
            <Choice><Radio name="mode" />Dodaj tylko wymiary</Choice>
          </ChoiceRow>
          <SelectAll>
            <Choice><Check defaultChecked />Zaznacz wszystko</Choice>
          </SelectAll>
          <ListFrame>
            <Groups>
              {groups.map(g => <ToleranceGroup key={g.id} {...g} />)}
            </Groups>
            <ListTrack>
              <Triangle up color="#8a8a8a" />
              <Thumb $height={327} />
              <TrackSpace />
              <Triangle color="#8a8a8a" />
            </ListTrack>
          </ListFrame>
          <Actions>
            <ActionButton type="button">Zapisz zmiany</ActionButton>
            <ActionButton type="button">Anuluj</ActionButton>
          </Actions>
        </DialogBody>
      </Dialog>
    </Page>
  );
}
